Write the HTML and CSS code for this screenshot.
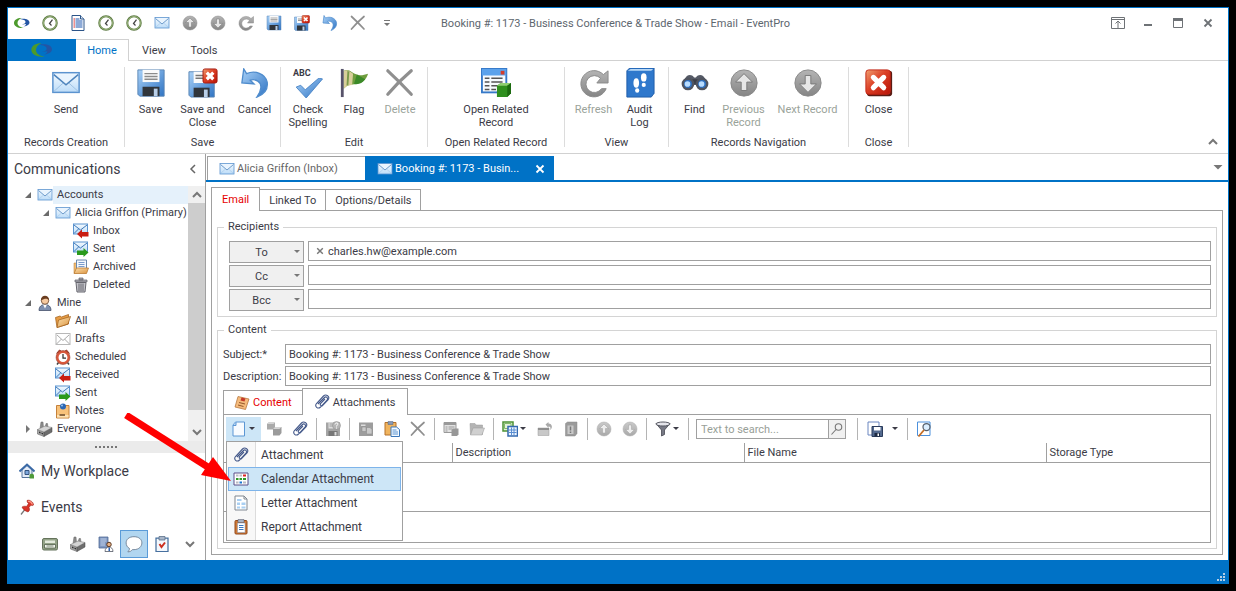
FILE: index.html
```html
<!DOCTYPE html>
<html lang="en">
<head>
  <meta charset="UTF-8">
  <meta name="viewport" content="width=device-width, initial-scale=1.0">
  <title>Booking #: 1173 - Business Conference &amp; Trade Show - Email - EventPro</title>
  <link rel="stylesheet" href="styles.css">
</head>
<body>
  <!-- Icons -->
  <svg class="sprite" aria-hidden="true">
    <defs>
      <linearGradient id="gBlue" x1="0" y1="0" x2="1" y2="1"><stop offset="0" stop-color="#a9d1f7"/><stop offset="1" stop-color="#2f74c4"/></linearGradient>
      <linearGradient id="gPale" x1="0" y1="0" x2="0" y2="1"><stop offset="0" stop-color="#f4faff"/><stop offset="1" stop-color="#bcdcf8"/></linearGradient>
      <linearGradient id="gGray" x1="0" y1="0" x2="0" y2="1"><stop offset="0" stop-color="#b4b4b4"/><stop offset="1" stop-color="#858585"/></linearGradient>
      <linearGradient id="gRed" x1="0" y1="0" x2="1" y2="1"><stop offset="0" stop-color="#f0a070"/><stop offset=".45" stop-color="#dc4026"/><stop offset="1" stop-color="#b81407"/></linearGradient>
      <linearGradient id="gFold" x1="0" y1="0" x2="1" y2="1"><stop offset="0" stop-color="#fbe0ae"/><stop offset="1" stop-color="#dc9440"/></linearGradient>
    </defs>
    <symbol id="logo" viewBox="0 0 32 24"><path d="M15 2C6 2 0 6 0 12s7 11 20 10c-8-1-13-5-13-10 0-4 3-8 8-10z" fill="#4c9a2c"/><path d="M12 4c10-2 19 1 19 7 0 4-4 7-12 8 3-1 5-3 5-5l-8 1c3-1 7-2 7-5 0-4-5-5-11-6z" fill="#2455a4"/></symbol>
    <symbol id="mail" viewBox="0 0 32 32"><rect x="2" y="5" width="28" height="21" fill="url(#gPale)" stroke="#5b93cf" stroke-width="1.600"/><path d="M3 25l10-9M29 25l-10-9" stroke="#9dc0e2" fill="none"/><path d="M3 7l13 11L29 7" fill="#e9f4fe" stroke="#4e84bc" stroke-width="1.600"/></symbol>
    <symbol id="mail-gray" viewBox="0 0 32 32"><rect x="2" y="5" width="28" height="22" fill="#fff" stroke="#b8b8b8" stroke-width="2"/><path d="M3 26l10-10M29 26L19 16M4 8l12 11L28 8" stroke="#aaa" stroke-width="2" fill="none"/></symbol>
    <symbol id="mail-in" viewBox="0 0 32 32"><rect x="1" y="2" width="28" height="20" fill="url(#gPale)" stroke="#5b93cf" stroke-width="2"/><path d="M2 4l13 10L28 4M2 21l9-9" fill="none" stroke="#3e78b8" stroke-width="2"/><path d="M8 22l10-9v5h13v9H18v4z" fill="#c91d12"/></symbol>
    <symbol id="mail-out" viewBox="0 0 32 32"><rect x="1" y="2" width="28" height="20" fill="url(#gPale)" stroke="#5b93cf" stroke-width="2"/><path d="M2 4l13 10L28 4M2 21l9-9" fill="none" stroke="#3e78b8" stroke-width="2"/><path d="M31 23l-10-9v5H8v9h13v4z" fill="#2a9a1c"/></symbol>
    <symbol id="clock" viewBox="0 0 32 32"><circle cx="16" cy="16" r="13.500" fill="#fff" stroke="#5d7a44" stroke-width="4"/><circle cx="16" cy="16" r="13" fill="none" stroke="#a9c48a" stroke-width="1.500"/><path d="M21 9l-6 8 4 4" fill="none" stroke="#444" stroke-width="2.500"/></symbol>
    <symbol id="doc" viewBox="0 0 32 32"><path d="M4 1h17l7 7v23H4z" fill="#fff" stroke="#2c5488" stroke-width="2"/><path d="M21 1v7h7" fill="#d8e4f2" stroke="#2c5488" stroke-width="2"/><path d="M7 8h3M7 12h3M7 16h3M7 20h3M7 24h3" stroke="#d22" stroke-width="2"/><path d="M11 8h8M11 12h14M11 16h14M11 20h14M11 24h14" stroke="#1d56b0" stroke-width="2.200"/></symbol>
    <symbol id="up" viewBox="0 0 32 32"><circle cx="16" cy="16" r="14" fill="url(#gGray)" stroke="#888"/><path d="M16 6l9 9h-6v9h-6v-9H7z" fill="#e6e6e6" stroke="#777"/></symbol>
    <symbol id="down" viewBox="0 0 32 32"><circle cx="16" cy="16" r="14" fill="url(#gGray)" stroke="#888"/><path d="M16 26l9-9h-6V8h-6v9H7z" fill="#e6e6e6" stroke="#777"/></symbol>
    <symbol id="refresh" viewBox="0 0 32 32"><path d="M29 22a14 14 0 1 1-3-15l5-4v13H19l4-5a9 9 0 1 0 1 11z" fill="url(#gGray)" stroke="#8a8a8a"/></symbol>
    <symbol id="disk" viewBox="0 0 32 32"><path d="M2 2h28v28H4l-2-2z" fill="url(#gBlue)" stroke="#5a85b4"/><path d="M7 2h18v13H7z" fill="#fafafa"/><path d="M9 6h14M9 9h14M9 12h14" stroke="#8b8b8b" stroke-width="1.500"/><path d="M7 20h18v10H7z" fill="#30353b"/><path d="M19 22h4v8h-4z" fill="#b9cfe8"/></symbol>
    <symbol id="disk-close" viewBox="0 0 32 32"><path d="M1 4h27v27H3l-2-2z" fill="url(#gBlue)" stroke="#5a85b4"/><path d="M6 4h16v12H6z" fill="#fafafa"/><path d="M8 8h12M8 11h12" stroke="#777" stroke-width="1.500"/><path d="M6 21h17v10H6z" fill="#30353b"/><path d="M17 23h4v8h-4z" fill="#b9cfe8"/><rect x="16" y="1" width="15" height="15" rx="2" fill="url(#gRed)" stroke="#a31a10"/><path d="M20 5l7 7M27 5l-7 7" stroke="#fff" stroke-width="3.500"/></symbol>
    <symbol id="undo" viewBox="0 0 32 32"><path d="M4 1l3 5c9-4 20 0 22 9 1 7-3 13-11 16 5-7 6-14 1-17-3-2-5-2-8-1l4 4-13-1z" fill="url(#gBlue)" stroke="#4f8ccd" stroke-width="1.400"/></symbol>
    <symbol id="cross" viewBox="0 0 32 32"><path d="M3 3q12 11 25 25M28 3Q15 14 3 28" fill="none" stroke="#8f8f8f" stroke-width="3.400" stroke-linecap="round"/></symbol>
    <symbol id="check" viewBox="0 0 32 22"><path d="M3 10l5-2 5 5L28 0l4 1-18 21z" fill="url(#gBlue)" stroke="#4a84c6"/></symbol>
    <symbol id="flag" viewBox="0 0 32 32"><path d="M5 3c6-3 9 3 14 4 4 2 8 0 12-1-2 7-7 10-13 11-5 1-8 0-13 5z" fill="#6f9d3e"/><path d="M5 3c4-2 7 1 10 3l-1 12c-4 0-6 1-9 4z" fill="#d8cf9a"/><path d="M9 3l2 1-1 14-2 1z" fill="#7a9a4a"/><path d="M19 7l-3 10c5 1 9-1 12-5z" fill="#3c8a28"/><path d="M2 1h3v30H2z" fill="#57536a"/></symbol>
    <symbol id="related" viewBox="0 0 32 32"><rect x="1" y="1" width="26" height="25" fill="#f7fbff" stroke="#3679c8" stroke-width="2"/><path d="M1 1h26v7H1z" fill="#5ba2ec"/><path d="M21 3h4v4h-4z" fill="#d43d2b"/><path d="M4 11h5M11 11h12M4 15h5M11 15h12M4 19h5M11 19h8M4 23h5M11 23h5" stroke="#555" stroke-width="1.500"/><path d="M17 19l4-3h11v11l-4 4H17z" fill="#2f8f1e"/><path d="M17 19l4-3h11l-4 3z" fill="#8fce72"/><path d="M28 19l4-3v11l-4 4z" fill="#1c6a10"/></symbol>
    <symbol id="audit" viewBox="0 0 32 32"><path d="M2 3l3-3h26v27l-3 4H2z" fill="#2f78cc" stroke="#1f5ca6"/><path d="M3 3h25l2-2H6z" fill="#b9d8f6"/><ellipse cx="12" cy="16" rx="3" ry="5" fill="#fff"/><ellipse cx="13" cy="24" rx="2.200" ry="2.400" fill="#fff"/><ellipse cx="20" cy="10" rx="3" ry="4.500" fill="#fff"/><ellipse cx="20" cy="18" rx="2.200" ry="2.300" fill="#fff"/></symbol>
    <symbol id="find" viewBox="0 0 32 32"><path d="M5 12c2-5 7-6 10-2h2c3-4 8-3 10 2l3 5H2z" fill="#555a66"/><path d="M13 12h6v6h-6z" fill="#3c3f49"/><circle cx="8.500" cy="17" r="5.500" fill="#2d6fc0" stroke="#50545f" stroke-width="2.500"/><circle cx="23.500" cy="17" r="5.500" fill="#2d6fc0" stroke="#50545f" stroke-width="2.500"/><circle cx="8" cy="17" r="3" fill="#b8dcff"/><circle cx="23" cy="17" r="3" fill="#b8dcff"/></symbol>
    <symbol id="close" viewBox="0 0 32 32"><rect x="3" y="3" width="27" height="27" rx="3" fill="#5a1c14"/><rect x="2" y="2" width="26" height="26" rx="3" fill="url(#gRed)" stroke="#c22414"/><path d="M10 10l11 11M21 10L10 21" stroke="#fff" stroke-width="5.500" stroke-linecap="round"/></symbol>
    <symbol id="archive" viewBox="0 0 32 32"><path d="M2 8h6v20H2z" fill="#f1bd76" stroke="#b9782e"/><path d="M7 2h20v20H7z" fill="#f4f8fd" stroke="#6a88ad" stroke-width="2"/><path d="M11 7h12M11 11h12M11 15h12" stroke="#7a9ccc" stroke-width="2"/><path d="M2 29l5-11h24l-4 11z" fill="url(#gFold)" stroke="#b9782e" stroke-width="1.500"/></symbol>
    <symbol id="trash" viewBox="0 0 32 32"><path d="M4 6h24v4H4zM12 2h8v4h-8z" fill="#a8a8b0" stroke="#66666e" stroke-width="1.500"/><path d="M6 11h20l-2 19H8z" fill="#c4c4ca" stroke="#66666e" stroke-width="2"/><path d="M12 13v15M16 13v15M20 13v15" stroke="#66666e" stroke-width="2"/></symbol>
    <symbol id="user" viewBox="0 0 32 32"><path d="M4 31c0-8 5-12 12-12s12 4 12 12z" fill="#7e90b0" stroke="#3d4a64" stroke-width="1.500"/><path d="M12 19l4 8 4-8z" fill="#fff"/><circle cx="16" cy="11" r="7.500" fill="#f5c9a0" stroke="#5c3a24" stroke-width="1.500"/><path d="M8 11c-1-13 17-13 16 0-3-5-9-4-16 0z" fill="#6b3d20"/></symbol>
    <symbol id="folder" viewBox="0 0 32 32"><path d="M1 9l9-3 3 2 14-5v19L4 29z" fill="#e79d45" stroke="#a3621e" stroke-width="1.500"/><path d="M4 29l3-15L31 7l-5 15z" fill="url(#gFold)" stroke="#a3621e" stroke-width="1.500"/></symbol>
    <symbol id="alarm" viewBox="0 0 32 32"><path d="M3 9l6-7 5 4M29 9l-6-7-5 4" fill="#d34b32" stroke="#8c2d1e" stroke-width="2"/><path d="M7 27l-3 4M25 27l3 4" stroke="#444" stroke-width="3"/><circle cx="16" cy="17" r="11.500" fill="#fff" stroke="#d8583c" stroke-width="5"/><circle cx="16" cy="17" r="14" fill="none" stroke="#8c3d2e"/><path d="M16 10v8h6" fill="none" stroke="#333" stroke-width="2.500"/></symbol>
    <symbol id="note" viewBox="0 0 32 32"><path d="M3 5h25v25H3z" fill="#f8c27a" stroke="#c5813a" stroke-width="2"/><path d="M4 24h23v5H4z" fill="#fde2b4"/><path d="M9 22h11v4H9z" fill="#8d6a42"/><circle cx="16" cy="7" r="6" fill="#2b68b5"/><circle cx="14" cy="5" r="2" fill="#9cc8f2"/></symbol>
    <symbol id="factory" viewBox="0 0 32 32"><path d="M6 15L8 2h4l1 11 4-3 1-5h3l1 8z" fill="#8a8a8a" stroke="#666"/><path d="M1 17l13 5v9L1 26z" fill="#a6a6a6" stroke="#555"/><path d="M14 22l16-9v9l-16 9z" fill="#6d6d6d" stroke="#444"/><path d="M1 17l15-7 14 3-16 9z" fill="#d4d4d4" stroke="#777"/><path d="M4 21l3 1v3l-3-1zM9 23l3 1v3l-3-1z" fill="#333"/></symbol>
    <symbol id="home" viewBox="0 0 32 32"><path d="M6 14L16 5l10 9v15H6z" fill="#e4ecf8" stroke="#55749c" stroke-width="2"/><path d="M1 17L16 3l15 14" fill="none" stroke="#3b6aa6" stroke-width="4"/><path d="M12 15h8v8h-8z" fill="#7da7dc" stroke="#34557f" stroke-width="2"/><path d="M21 25c0-5 9-5 9 0v6h-9z" fill="#4e9a3a"/></symbol>
    <symbol id="pin" viewBox="0 0 32 32"><path d="M4 31l10-13" stroke="#777" stroke-width="2.500"/><path d="M16 3c5-3 14 4 13 9-2 2-4 1-5 0l-4 5c2 4 1 7-2 9-6-2-10-5-12-10 3-2 6-2 9-1l4-6c-2-1-3-4-3-6z" fill="#d83428" stroke="#98180f"/><path d="M18 5c3-1 7 2 9 6" stroke="#ff9d8c" stroke-width="2.500" fill="none"/></symbol>
    <symbol id="register" viewBox="0 0 32 32"><rect x="1" y="5" width="30" height="23" rx="3" fill="#93a387" stroke="#65735c" stroke-width="2"/><path d="M6 9h20v5H6z" fill="#e3eadc"/><path d="M5 17h22v7H5z" fill="#f2f6ee" stroke="#4b5844" stroke-width="1.500"/><path d="M9 20h14" stroke="#7d8b74" stroke-width="2"/></symbol>
    <symbol id="building" viewBox="0 0 32 32"><path d="M2 2h18v22H2z" fill="#7f97c0" stroke="#4a6390" stroke-width="1.500"/><path d="M5 6h12M5 10h12M5 14h9M5 18h9" stroke="#d4e2f5" stroke-width="1.500"/><path d="M14 31c0-6 4-9 8-9s8 3 8 9z" fill="#fff" stroke="#4a4f5c" stroke-width="1.500"/><path d="M21 23h3v7h-3z" fill="#2d62b4"/><circle cx="22" cy="17" r="4.500" fill="#e7b184" stroke="#5c3a24" stroke-width="2"/></symbol>
    <symbol id="chat" viewBox="0 0 32 32"><path d="M16 3c9 0 14 5 14 11s-5 12-14 12l-3 0c-2 3-5 4-8 4 2-2 3-4 3-6-4-2-6-6-6-10C2 8 7 3 16 3z" fill="#fff" stroke="#6d7f93" stroke-width="1.600"/></symbol>
    <symbol id="task" viewBox="0 0 32 32"><path d="M4 4h24v27H4z" fill="#f4f8fd" stroke="#47709f" stroke-width="2.500"/><path d="M10 1h12v7H10z" fill="#a9b6c8" stroke="#566b86" stroke-width="1.500"/><path d="M11 16l4 6 7-9" fill="none" stroke="#cc2f1f" stroke-width="4"/></symbol>
    <symbol id="clip" viewBox="0 0 32 32"><path d="M8 20L21 7c3-3 8 1 5 5L13 26c-5 5-13-1-8-7L19 4c5-5 14 1 9 8L17 23c-2 2-6-1-4-4l9-9" fill="none" stroke="#44598a" stroke-width="2.200"/></symbol>
    <symbol id="new" viewBox="0 0 32 32"><path d="M9 2h18v28H4V8z" fill="#f8fbff" stroke="#5c97d4" stroke-width="2"/><path d="M4 9h6V2" fill="#b7d6f5" stroke="#5c97d4" stroke-width="2"/></symbol>
    <symbol id="cubes" viewBox="0 0 32 32"><path d="M2 6l3-3h13v11l-3 3H2z" fill="#aaa"/><path d="M14 16l4-4h13v12l-4 5H14z" fill="#9b9b9b"/><path d="M2 6l3-3h13l-3 3zM14 16l4-4h13l-4 4z" fill="#d4d4d4"/></symbol>
    <symbol id="disk-help" viewBox="0 0 32 32"><path d="M2 3h28v27H2z" fill="#a5a5a5"/><path d="M7 3h12v12H7z" fill="#ddd"/><path d="M9 6h8M9 10h8" stroke="#999" stroke-width="2"/><path d="M7 20h18v10H7z" fill="#777"/><path d="M19 22h4v7h-4z" fill="#ddd"/><circle cx="23" cy="9" r="8" fill="#b5b5b5" stroke="#8b8b8b"/><path d="M20 7c0-4 6-4 6-1 0 2-3 2-3 5M23 13v2" fill="none" stroke="#fff" stroke-width="2"/></symbol>
    <symbol id="copy-gray" viewBox="0 0 32 32"><path d="M2 3h28v27H2z" fill="#9d9d9d"/><path d="M6 7h9v3H6z" fill="#ddd"/><path d="M8 12h8v9H8zM17 13h7l4 4v9H17z" fill="#c9c9c9" stroke="#868686"/></symbol>
    <symbol id="paste" viewBox="0 0 32 32"><path d="M2 3h22v25H2z" fill="#f0b45e" stroke="#b5712a" stroke-width="2"/><path d="M8 1h10v6H8z" fill="#8798b4" stroke="#516585"/><path d="M14 12h11l6 5v14H14z" fill="#f4faff" stroke="#3c78ba" stroke-width="2"/><path d="M17 18h8M17 22h11M17 26h11" stroke="#5b94d2" stroke-width="2"/></symbol>
    <symbol id="form-gray" viewBox="0 0 32 32"><path d="M2 3h24v20H2z" fill="#e2e2e2" stroke="#999" stroke-width="2"/><path d="M2 3h24v5H2z" fill="#999"/><path d="M5 12h4M11 12h12M5 16h4M11 16h8M5 20h4" stroke="#999" stroke-width="2"/><path d="M17 18l3-3h11v12l-3 3H17z" fill="#979797"/></symbol>
    <symbol id="folder-gray" viewBox="0 0 32 32"><path d="M2 5h10l2 3h13v19H3z" fill="#b4b4b4" stroke="#999"/><path d="M3 28l5-14h23l-5 14z" fill="#d0d0d0" stroke="#999"/></symbol>
    <symbol id="grid" viewBox="0 0 32 32"><path d="M2 2h20v18H2z" fill="#e3f2d8" stroke="#4d9234" stroke-width="3"/><path d="M5 5h13v10H5z" fill="none" stroke="#83b86a" stroke-width="2"/><path d="M12 11h19v19H12z" fill="#edf5ff" stroke="#3569b0" stroke-width="3"/><path d="M14 18h15M14 23h15M19 13v15M24 13v15" stroke="#5b8ed2" stroke-width="2"/></symbol>
    <symbol id="export" viewBox="0 0 32 32"><path d="M2 14h22v15H2z" fill="#c8c8c8" stroke="#999"/><path d="M2 14h22v4H2z" fill="#8f8f8f"/><path d="M17 7l6-5v3c8 0 9 10 3 13 2-4 1-7-3-7v3z" fill="#aaa"/></symbol>
    <symbol id="book-gray" viewBox="0 0 32 32"><path d="M5 5l4-3h19v23l-4 5H5z" fill="#9b9b9b" stroke="#888"/><path d="M9 9h12v17H9z" fill="#c9c9c9"/><path d="M15 11v8M15 21v3" stroke="#777" stroke-width="3"/></symbol>
    <symbol id="filter" viewBox="0 0 32 32"><path d="M2 5l11 13v12l6-3v-9L30 5z" fill="#777985" stroke="#42434c" stroke-width="1.500"/><ellipse cx="16" cy="6" rx="14" ry="4" fill="#e4e4ea" stroke="#555761" stroke-width="2"/></symbol>
    <symbol id="search" viewBox="0 0 32 32"><circle cx="19" cy="12" r="6.500" fill="none" stroke="#777" stroke-width="2.200"/><path d="M14 17L5 27" stroke="#777" stroke-width="2.200"/></symbol>
    <symbol id="save-page" viewBox="0 0 32 32"><path d="M2 2h22v26H2z" fill="#fff" stroke="#6a86c0" stroke-width="2"/><path d="M10 11h21v20H10z" fill="#53698e" stroke="#2b3c5c" stroke-width="2"/><path d="M14 12h13v7H14z" fill="#fff"/><path d="M15 24h11v7H15z" fill="#1d2a42"/><path d="M21 25h3v5h-3z" fill="#fff"/></symbol>
    <symbol id="preview" viewBox="0 0 32 32"><path d="M3 2h25v27H3z" fill="#fff" stroke="#4b90dc" stroke-width="2"/><circle cx="21" cy="12" r="7" fill="#dcefff" stroke="#55606e" stroke-width="2.500"/><path d="M16 18L5 31" stroke="#c66e25" stroke-width="3.500"/></symbol>
    <symbol id="note-pin" viewBox="0 0 32 32"><path d="M8 3l22 5-7 21L2 24z" fill="#f5bb7c" stroke="#b5743a" stroke-width="1.500"/><path d="M10 15l12 3M8 20l11 3" stroke="#94582a" stroke-width="2"/><path d="M15 5l8 2-2 6-8-2z" fill="#c43a2a"/></symbol>
    <symbol id="calendar" viewBox="0 0 32 32"><path d="M2 4h28v24H2z" fill="#fff" stroke="#5a4f88" stroke-width="2"/><path d="M6 7h5v4H6zM13 7h5v4h-5z" fill="#b9b9c4"/><path d="M20 7h6v4h-6z" fill="#d22"/><path d="M6 14h5v4H6zM13 14h5v4h-5zM20 14h6v4h-6z" fill="#2d9a25"/><path d="M6 21h5v4H6zM20 21h6v4h-6z" fill="#b9b9c4"/><path d="M13 21h5v4h-5z" fill="#1874d0"/></symbol>
    <symbol id="letter" viewBox="0 0 32 32"><path d="M4 2h18l6 6v22H4z" fill="#fff" stroke="#808891" stroke-width="2"/><path d="M22 2v6h6" fill="none" stroke="#808891" stroke-width="2"/><path d="M8 8h9v4H8zM8 15h6v5H8zM17 15h8v5h-8zM8 23h6v4H8zM17 23h8v4h-8z" fill="#a9cff2"/></symbol>
    <symbol id="report" viewBox="0 0 32 32"><rect x="4" y="3" width="24" height="27" rx="2" fill="#d07a36" stroke="#92481a" stroke-width="2"/><path d="M9 8h15v19H9z" fill="#fff" stroke="#7f93b0"/><path d="M10 1h12v6H10z" fill="#a8b3c4" stroke="#556"/><path d="M12 13h9M12 17h9M12 21h9" stroke="#3b77c0" stroke-width="2"/></symbol>
    <symbol id="caret" viewBox="0 0 8 8"><path d="M1 2h6L4 5z" fill="currentColor"/></symbol>
    <symbol id="overflow" viewBox="0 0 8 8"><path d="M1 1h6v1H1zM1 4h6L4 7z" fill="#777"/></symbol>
    <symbol id="chev-up" viewBox="0 0 10 10"><path d="M1 7l4-4 4 4" fill="none" stroke="#777" stroke-width="2"/></symbol>
    <symbol id="chev-down" viewBox="0 0 10 10"><path d="M1 3l4 4 4-4" fill="none" stroke="#777" stroke-width="2"/></symbol>
    <symbol id="chev-left" viewBox="0 0 10 10"><path d="M7 1L3 5l4 4" fill="none" stroke="#666" stroke-width="1.500"/></symbol>
    <symbol id="x" viewBox="0 0 10 10"><path d="M1.500 1.500l7 7M8.500 1.500l-7 7" fill="none" stroke="currentColor" stroke-width="1.800"/></symbol>
    <symbol id="open" viewBox="0 0 8 8"><path d="M7 1v6H1z" fill="#6b6b6b"/></symbol>
    <symbol id="shut" viewBox="0 0 8 8"><path d="M2 0l4 4-4 4z" fill="#777"/></symbol>
    <symbol id="w-pop" viewBox="0 0 14 12"><path d="M.5.5h13v11H.5zM1 2.500h12" fill="none" stroke="#6e7276"/><path d="M7 4v7M4.500 6.500L7 4l2.500 2.500" fill="none" stroke="#6e7276"/></symbol>
    <symbol id="w-min" viewBox="0 0 10 10"><path d="M1 6h8v2H1z" fill="#6e7276"/></symbol>
    <symbol id="w-max" viewBox="0 0 10 10"><path d="M.5.5h9v9h-9z" fill="none" stroke="#6e7276"/><path d="M0 0h10v3H0z" fill="#6e7276"/></symbol>
  </svg>

  <div class="window">
    <!-- Title bar -->
    <header class="titlebar">
      <div class="quick-access">
        <button aria-label="EventPro"><svg class="icon"><use href="#logo"/></svg></button>
        <button aria-label="Clock"><svg class="icon"><use href="#clock"/></svg></button>
        <button aria-label="Document"><svg class="icon"><use href="#doc"/></svg></button>
        <button aria-label="Start"><svg class="icon"><use href="#clock"/></svg></button>
        <button aria-label="Stop"><svg class="icon"><use href="#clock"/></svg></button>
        <button aria-label="Send"><svg class="icon"><use href="#mail"/></svg></button>
        <button aria-label="Previous"><svg class="icon"><use href="#up"/></svg></button>
        <button aria-label="Next"><svg class="icon"><use href="#down"/></svg></button>
        <button aria-label="Refresh"><svg class="icon"><use href="#refresh"/></svg></button>
        <button aria-label="Save"><svg class="icon"><use href="#disk"/></svg></button>
        <button aria-label="Save and Close"><svg class="icon"><use href="#disk-close"/></svg></button>
        <button aria-label="Cancel"><svg class="icon"><use href="#undo"/></svg></button>
        <button aria-label="Delete"><svg class="icon"><use href="#cross"/></svg></button>
        <button class="customize" aria-label="Customize"><svg class="tiny"><use href="#overflow"/></svg></button>
      </div>
      <h1 class="window-title">Booking #: 1173 - Business Conference &amp; Trade Show - Email - EventPro</h1>
      <div class="window-controls">
        <button aria-label="Ribbon options"><svg class="pop"><use href="#w-pop"/></svg></button>
        <button aria-label="Minimize"><svg class="small"><use href="#w-min"/></svg></button>
        <button aria-label="Maximize"><svg class="small"><use href="#w-max"/></svg></button>
        <button aria-label="Close window"><svg class="small"><use href="#x"/></svg></button>
      </div>
    </header>

    <!-- Ribbon -->
    <nav class="ribbon-tabs">
      <button class="file-tab" aria-label="File"><svg class="file-logo"><use href="#logo"/></svg></button>
      <button class="ribbon-tab active">Home</button>
      <button class="ribbon-tab">View</button>
      <button class="ribbon-tab">Tools</button>
    </nav>
    <div class="ribbon">
      <section class="ribbon-group creation">
        <div class="commands">
          <button class="command"><svg class="big"><use href="#mail"/></svg>Send</button>
        </div>
        <h2>Records Creation</h2>
      </section>
      <section class="ribbon-group save">
        <div class="commands">
          <button class="command"><svg class="big"><use href="#disk"/></svg>Save</button>
          <button class="command"><svg class="big"><use href="#disk-close"/></svg>Save and Close</button>
          <button class="command"><svg class="big"><use href="#undo"/></svg>Cancel</button>
        </div>
        <h2>Save</h2>
      </section>
      <section class="ribbon-group edit">
        <div class="commands">
          <button class="command narrow"><span class="abc">ABC</span><svg class="check"><use href="#check"/></svg>Check Spelling</button>
          <button class="command narrow"><svg class="big"><use href="#flag"/></svg>Flag</button>
          <button class="command narrow" disabled><svg class="big"><use href="#cross"/></svg>Delete</button>
        </div>
        <h2>Edit</h2>
      </section>
      <section class="ribbon-group related">
        <div class="commands">
          <button class="command wide"><svg class="big"><use href="#related"/></svg>Open Related Record</button>
        </div>
        <h2>Open Related Record</h2>
      </section>
      <section class="ribbon-group view">
        <div class="commands">
          <button class="command narrow" disabled><svg class="big"><use href="#refresh"/></svg>Refresh</button>
          <button class="command narrow"><svg class="big"><use href="#audit"/></svg>Audit<br>Log</button>
        </div>
        <h2>View</h2>
      </section>
      <section class="ribbon-group navigation">
        <div class="commands">
          <button class="command narrow"><svg class="big"><use href="#find"/></svg>Find</button>
          <button class="command" disabled><svg class="big"><use href="#up"/></svg>Previous Record</button>
          <button class="command wide" disabled><svg class="big"><use href="#down"/></svg>Next Record</button>
        </div>
        <h2>Records Navigation</h2>
      </section>
      <section class="ribbon-group closing">
        <div class="commands">
          <button class="command narrow"><svg class="big"><use href="#close"/></svg>Close</button>
        </div>
        <h2>Close</h2>
      </section>
      <button class="collapse-ribbon" aria-label="Collapse ribbon"><svg class="small"><use href="#chev-up"/></svg></button>
    </div>

    <div class="workspace">
      <!-- Sidebar -->
      <aside class="sidebar">
        <div class="sidebar-header">
          <h2>Communications</h2>
          <button aria-label="Collapse"><svg class="small"><use href="#chev-left"/></svg></button>
        </div>
        <div class="tree-wrap">
          <ul class="tree">
            <li><a href="#" class="selected"><span class="expander"><svg class="tiny"><use href="#open"/></svg></span><svg class="icon"><use href="#mail"/></svg><span class="name">Accounts</span></a>
              <ul>
                <li><a href="#"><span class="expander"><svg class="tiny"><use href="#open"/></svg></span><svg class="icon"><use href="#mail"/></svg><span class="name">Alicia Griffon (Primary)</span></a>
                  <ul>
                    <li><a href="#"><span class="expander"></span><svg class="icon"><use href="#mail-in"/></svg><span class="name">Inbox</span></a></li>
                    <li><a href="#"><span class="expander"></span><svg class="icon"><use href="#mail-out"/></svg><span class="name">Sent</span></a></li>
                    <li><a href="#"><span class="expander"></span><svg class="icon"><use href="#archive"/></svg><span class="name">Archived</span></a></li>
                    <li><a href="#"><span class="expander"></span><svg class="icon"><use href="#trash"/></svg><span class="name">Deleted</span></a></li>
                  </ul>
                </li>
              </ul>
            </li>
            <li><a href="#"><span class="expander"><svg class="tiny"><use href="#open"/></svg></span><svg class="icon"><use href="#user"/></svg><span class="name">Mine</span></a>
              <ul>
                <li><a href="#"><span class="expander"></span><svg class="icon"><use href="#folder"/></svg><span class="name">All</span></a></li>
                <li><a href="#"><span class="expander"></span><svg class="icon"><use href="#mail-gray"/></svg><span class="name">Drafts</span></a></li>
                <li><a href="#"><span class="expander"></span><svg class="icon"><use href="#alarm"/></svg><span class="name">Scheduled</span></a></li>
                <li><a href="#"><span class="expander"></span><svg class="icon"><use href="#mail-in"/></svg><span class="name">Received</span></a></li>
                <li><a href="#"><span class="expander"></span><svg class="icon"><use href="#mail-out"/></svg><span class="name">Sent</span></a></li>
                <li><a href="#"><span class="expander"></span><svg class="icon"><use href="#note"/></svg><span class="name">Notes</span></a></li>
              </ul>
            </li>
            <li><a href="#"><span class="expander"><svg class="tiny"><use href="#shut"/></svg></span><svg class="icon"><use href="#factory"/></svg><span class="name">Everyone</span></a></li>
          </ul>
          <div class="scrollbar">
            <svg class="small"><use href="#chev-up"/></svg>
            <div class="thumb"></div>
            <svg class="small"><use href="#chev-down"/></svg>
          </div>
        </div>
        <div class="splitter"></div>
        <a href="#" class="module"><svg class="icon"><use href="#home"/></svg>My Workplace</a>
        <a href="#" class="module"><svg class="icon"><use href="#pin"/></svg>Events</a>
        <div class="module-bar">
          <button aria-label="Accounting"><svg class="icon"><use href="#register"/></svg></button>
          <button aria-label="Venues"><svg class="icon"><use href="#factory"/></svg></button>
          <button aria-label="Accounts"><svg class="icon"><use href="#building"/></svg></button>
          <button class="active" aria-label="Communications"><svg class="chat"><use href="#chat"/></svg></button>
          <button aria-label="Tasks"><svg class="icon"><use href="#task"/></svg></button>
          <button aria-label="More"><svg class="small"><use href="#chev-down"/></svg></button>
        </div>
      </aside>

      <!-- Documents -->
      <main class="documents">
        <div class="doc-tabs">
          <button class="doc-tab first"><svg class="icon"><use href="#mail"/></svg>Alicia Griffon (Inbox)</button>
          <button class="doc-tab active"><svg class="icon"><use href="#mail"/></svg><span>Booking #: 1173 - Busin...</span><svg class="small"><use href="#x"/></svg></button>
          <button class="doc-list" aria-label="Open documents"><svg class="caret-lg"><use href="#caret"/></svg></button>
        </div>

        <div class="page">
          <div class="tabs">
            <button class="tab active required">Email</button>
            <button class="tab">Linked To</button>
            <button class="tab">Options/Details</button>
          </div>
          <form class="panel">
            <fieldset class="recipients">
              <legend>Recipients</legend>
              <div class="recipient">
                <button type="button" class="pick"><span>To</span><svg class="tiny"><use href="#caret"/></svg></button>
                <div class="address"><button type="button" aria-label="Remove"><svg class="mini"><use href="#x"/></svg></button><input type="text" aria-label="To" value="charles.hw@example.com"></div>
              </div>
              <div class="recipient">
                <button type="button" class="pick"><span>Cc</span><svg class="tiny"><use href="#caret"/></svg></button>
                <div class="address"><input type="text" aria-label="Cc"></div>
              </div>
              <div class="recipient">
                <button type="button" class="pick"><span>Bcc</span><svg class="tiny"><use href="#caret"/></svg></button>
                <div class="address"><input type="text" aria-label="Bcc"></div>
              </div>
            </fieldset>

            <fieldset class="content">
              <legend>Content</legend>
              <div class="field">
                <label for="subject">Subject:*</label>
                <input type="text" id="subject" value="Booking #: 1173 - Business Conference &amp; Trade Show">
              </div>
              <div class="field">
                <label for="description">Description:</label>
                <input type="text" id="description" value="Booking #: 1173 - Business Conference &amp; Trade Show">
              </div>
              <div class="tabs inner">
                <button type="button" class="tab required"><svg class="icon"><use href="#note-pin"/></svg>Content</button>
                <button type="button" class="tab active"><svg class="icon"><use href="#clip"/></svg>Attachments</button>
              </div>
              <div class="attachments">
                <div class="toolbar">
                  <div class="dropdown">
                    <button type="button" class="tool split open" aria-label="New"><svg class="icon"><use href="#new"/></svg><svg class="tiny"><use href="#caret"/></svg></button>
                    <ul class="menu">
                      <li><button type="button"><svg class="icon"><use href="#clip"/></svg><span>Attachment</span></button></li>
                      <li><button type="button" class="hover"><svg class="icon"><use href="#calendar"/></svg><span>Calendar Attachment</span></button></li>
                      <li><button type="button"><svg class="icon"><use href="#letter"/></svg><span>Letter Attachment</span></button></li>
                      <li><button type="button"><svg class="icon"><use href="#report"/></svg><span>Report Attachment</span></button></li>
                    </ul>
                  </div>
                  <button type="button" class="tool" aria-label="Link record"><svg class="icon"><use href="#cubes"/></svg></button>
                  <button type="button" class="tool" aria-label="Attach"><svg class="icon"><use href="#clip"/></svg></button>
                  <span class="divider"></span>
                  <button type="button" class="tool" aria-label="Save as"><svg class="icon"><use href="#disk-help"/></svg></button>
                  <span class="divider"></span>
                  <button type="button" class="tool" aria-label="Copy"><svg class="icon"><use href="#copy-gray"/></svg></button>
                  <button type="button" class="tool" aria-label="Paste"><svg class="icon"><use href="#paste"/></svg></button>
                  <button type="button" class="tool" aria-label="Delete"><svg class="icon"><use href="#cross"/></svg></button>
                  <span class="divider"></span>
                  <button type="button" class="tool" aria-label="Open record"><svg class="icon"><use href="#form-gray"/></svg></button>
                  <button type="button" class="tool" aria-label="Open"><svg class="icon"><use href="#folder-gray"/></svg></button>
                  <span class="divider"></span>
                  <button type="button" class="tool split" aria-label="Layouts"><svg class="icon"><use href="#grid"/></svg><svg class="tiny"><use href="#caret"/></svg></button>
                  <button type="button" class="tool" aria-label="Export"><svg class="icon"><use href="#export"/></svg></button>
                  <button type="button" class="tool" aria-label="Log"><svg class="icon"><use href="#book-gray"/></svg></button>
                  <span class="divider"></span>
                  <button type="button" class="tool faded" aria-label="Move up"><svg class="icon"><use href="#up"/></svg></button>
                  <button type="button" class="tool faded" aria-label="Move down"><svg class="icon"><use href="#down"/></svg></button>
                  <span class="divider"></span>
                  <button type="button" class="tool split" aria-label="Filter"><svg class="icon"><use href="#filter"/></svg><svg class="tiny"><use href="#caret"/></svg></button>
                  <span class="divider"></span>
                  <div class="search">
                    <input type="text" placeholder="Text to search..." aria-label="Text to search">
                    <button type="button" aria-label="Search"><svg class="icon"><use href="#search"/></svg></button>
                  </div>
                  <span class="divider"></span>
                  <button type="button" class="tool split roomy" aria-label="Save layout"><svg class="icon"><use href="#save-page"/></svg><svg class="tiny"><use href="#caret"/></svg></button>
                  <span class="divider"></span>
                  <button type="button" class="tool" aria-label="Preview"><svg class="icon"><use href="#preview"/></svg></button>
                </div>
                <table class="grid">
                  <colgroup><col class="c-name"><col class="c-desc"><col class="c-file"><col></colgroup>
                  <thead>
                    <tr><th></th><th>Description</th><th>File Name</th><th>Storage Type</th></tr>
                  </thead>
                </table>
                <div class="grid-space"></div>
                <div class="grid-footer"></div>
              </div>
            </fieldset>
          </form>
        </div>
      </main>

      <!-- Pointer to the highlighted menu item -->
      <svg class="pointer" viewBox="0 0 110 72"><path d="M3 2L88 56" stroke="#f00" stroke-width="7"/><path d="M90 44L78 62L108 68z" fill="#f00"/></svg>
    </div>

    <footer class="statusbar">
      <svg class="grip" viewBox="0 0 8 8"><path d="M6 0h2v2H6zM3 3h2v2H3zM6 3h2v2H6zM0 6h2v2H0zM3 6h2v2H3zM6 6h2v2H6z" fill="#b5cfe6"/></svg>
    </footer>
  </div>
</body>
</html>
```

FILE: styles.css
```css
* {
  box-sizing: border-box;
}

body {
  margin: 0;
  padding: 7px;
  background: #000;
  color: #3b3b46;
  font-family: Roboto, Tahoma, sans-serif;
  font-size: 11px;
  line-height: 13px;
}

button,
input {
  font: inherit;
  color: inherit;
  margin: 0;
  padding: 0;
  border: 0;
  background: none;
}

h1,
h2 {
  margin: 0;
  font-size: 11px;
  font-weight: 400;
}

ul {
  list-style: none;
  margin: 0;
  padding: 0;
}

a {
  color: inherit;
  text-decoration: none;
}

svg {
  flex: none;
  display: block;
}

.sprite {
  position: absolute;
  width: 0;
  height: 0;
}

.icon {
  width: 16px;
  height: 16px;
}

.big {
  width: 30px;
  height: 30px;
}

.small {
  width: 10px;
  height: 10px;
}

.tiny,
.mini {
  width: 8px;
  height: 8px;
}

.window {
  display: flex;
  flex-direction: column;
  min-height: calc(100vh - 14px);
  background: #fff;
  border: 1px solid #0072c6;
  border-bottom: 0;
}

/* Title bar */
.titlebar {
  display: flex;
  align-items: center;
  height: 31px;
  padding-bottom: 1px;
}

.quick-access,
.window-controls {
  display: flex;
  flex: 1;
}

.quick-access button,
.window-controls button {
  display: flex;
  align-items: center;
  justify-content: center;
  width: 28px;
  height: 28px;
}

.quick-access .customize {
  width: 30px;
}

.window-title {
  color: #5d666e;
  white-space: nowrap;
}

.window-controls {
  justify-content: flex-end;
  padding-right: 5px;
  color: #6e7276;
}

.window-controls button {
  width: 30px;
}

.pop {
  width: 14px;
  height: 12px;
}

/* Ribbon */
.ribbon-tabs {
  display: flex;
  height: 22px;
  border-bottom: 1px solid #d1d1d1;
}

.file-tab {
  display: flex;
  align-items: center;
  justify-content: center;
  width: 68px;
  height: 22px;
  background: #0072c6;
}

.file-logo {
  width: 22px;
  height: 16px;
}

.ribbon-tab {
  height: 22px;
  width: 50px;
}

.ribbon-tab.active {
  width: 53px;
  color: #0072c6;
  background: #fff;
  border: 1px solid #d1d1d1;
  border-bottom: 0;
  border-left: 0;
}

.ribbon {
  display: flex;
  height: 93px;
  padding-top: 6px;
  border-bottom: 1px solid #d1d1d1;
}

.ribbon-group {
  display: flex;
  flex-direction: column;
  justify-content: space-between;
  height: 80px;
  padding: 1px 3px 0;
  border-right: 1px solid #dcdcdc;
  text-align: center;
}

.creation { width: 117px; }
.save { width: 156px; }
.edit { width: 147px; }
.related { width: 137px; }
.view { width: 104px; }
.navigation { width: 180px; }
.closing { width: 60px; }

.ribbon-group h2 {
  line-height: 8px;
  white-space: nowrap;
}

.commands {
  display: flex;
  justify-content: center;
  align-items: flex-start;
}

.command {
  display: block;
  flex: none;
  width: 52px;
}

.command.narrow {
  width: 46px;
}

.command.wide {
  width: 76px;
}

.command .big {
  margin: 0 auto 5px;
}

.abc {
  display: block;
  width: 30px;
  margin: 0 auto;
  font-size: 9px;
  font-weight: 700;
  line-height: 10px;
  text-align: left;
}

.check {
  width: 30px;
  height: 20px;
  margin: 0 auto 5px;
}

.command:disabled {
  color: #9aa39a;
}

.collapse-ribbon {
  align-self: flex-end;
  margin-left: auto;
  padding: 0 10px 6px;
}

/* Workspace */
.workspace {
  position: relative;
  display: flex;
  flex: 1;
}

.sidebar {
  display: flex;
  flex-direction: column;
  flex: none;
  width: 198px;
  border-right: 1px solid #a0a0a0;
}

.sidebar-header {
  display: flex;
  align-items: center;
  justify-content: space-between;
  height: 32px;
  padding: 0 7px 2px 6px;
}

.sidebar-header h2 {
  font-size: 14px;
}

.tree-wrap {
  display: flex;
  flex: 1;
}

.tree {
  flex: 1;
  min-width: 0;
}

.tree a {
  display: flex;
  align-items: center;
  height: 18px;
  white-space: nowrap;
}

.tree > li > a {
  padding-left: 11px;
}

.tree > li > ul > li > a {
  padding-left: 29px;
}

.tree ul ul a {
  padding-left: 47px;
}

.expander {
  display: flex;
  justify-content: center;
  width: 18px;
}

.name {
  flex: 1;
  line-height: 18px;
  padding-left: 4px;
}

.tree .selected .name {
  background: #e5f1fb;
}

.scrollbar {
  display: flex;
  flex-direction: column;
  flex: none;
  align-items: center;
  width: 17px;
  padding: 4px 0;
  background: #f0f0f0;
}

.thumb {
  flex: 1;
  width: 17px;
  margin: 3px 0 17px;
  background: #cdcdcd;
}

.splitter {
  display: flex;
  align-items: center;
  justify-content: center;
  height: 12px;
  background: #ebebeb;
}

.splitter::before {
  content: "";
  width: 23px;
  height: 2px;
  background: repeating-linear-gradient(90deg, #777 0 2px, transparent 2px 4px);
}

.module {
  display: flex;
  align-items: center;
  gap: 6px;
  height: 36px;
  padding-left: 11px;
  font-size: 14px;
}

.module-bar {
  display: flex;
  justify-content: flex-end;
  height: 35px;
  padding: 5px 1px 2px 0;
}

.module-bar button {
  display: flex;
  align-items: center;
  justify-content: center;
  width: 28px;
  height: 28px;
}

.module-bar .active {
  background: #b1d6f0;
  border: 1px solid #5a9bd8;
}

.chat {
  width: 18px;
  height: 18px;
}

/* Document tabs */
.documents {
  display: flex;
  flex-direction: column;
  flex: 1;
  min-width: 0;
}

.doc-tabs {
  display: flex;
  height: 28px;
  padding: 2px 0 0 1px;
  border-bottom: 2px solid #0072c6;
}

.doc-tab {
  display: flex;
  align-items: center;
  gap: 2px;
  width: 158px;
  padding-left: 11px;
  color: #666;
  border: 1px solid #a0a0a0;
  border-right: 0;
  border-bottom: 0;
}

.doc-tab.active {
  width: 189px;
  color: #fff;
  background: #0072c6;
  border-color: #0072c6;
}

.doc-tab.active .small {
  margin-left: auto;
  margin-right: 9px;
}

.doc-list {
  margin-left: auto;
  padding-right: 4px;
  color: #777;
}

.caret-lg {
  width: 12px;
  height: 12px;
}

.page {
  display: flex;
  flex-direction: column;
  flex: 1;
  padding: 5px;
}

.tabs {
  display: flex;
  align-items: flex-end;
}

.tab {
  display: flex;
  align-items: center;
  justify-content: center;
  gap: 3px;
  height: 21px;
  padding: 0 9px;
  margin-right: -1px;
  background: #fff;
  border: 1px solid #a0a0a0;
  border-bottom: 0;
}

.tab.active {
  position: relative;
  height: 24px;
  margin-bottom: -1px;
  padding: 0 10px;
}

.tab.required {
  color: #e60000;
}

.panel {
  display: flex;
  flex-direction: column;
  flex: 1;
  padding: 9px 5px 5px;
  border: 1px solid #a0a0a0;
}

fieldset {
  min-width: 0;
  margin: 0;
  padding: 7px 5px 5px;
  border: 1px solid #d4d4d4;
}

legend {
  height: 14px;
  margin-left: 1px;
  padding: 0 4px;
}

.recipients {
  display: flex;
  flex-direction: column;
  gap: 2px;
  padding-left: 11px;
}

.recipients legend {
  margin-left: -5px;
}

.recipient {
  display: flex;
  gap: 4px;
}

.pick {
  display: flex;
  align-items: center;
  width: 75px;
  height: 22px;
  padding-right: 2px;
  background: #f0f0f0;
  border: 1px solid #a0a0a0;
  color: #3b3b46;
}

.pick span {
  flex: 1;
}

.pick svg {
  color: #777;
}

.address {
  display: flex;
  align-items: center;
  flex: 1;
  height: 20px;
  padding-left: 7px;
  border: 1px solid #a0a0a0;
}

.address input {
  flex: 1;
  padding-left: 4px;
}

.address svg {
  color: #777;
}

.content {
  display: flex;
  flex-direction: column;
  flex: 1;
  margin-top: 6px;
}

.field {
  display: flex;
  align-items: center;
  margin-bottom: 2px;
}

.field label {
  width: 62px;
  white-space: nowrap;
}

.field input {
  flex: 1;
  height: 20px;
  padding: 0 3px;
  border: 1px solid #a0a0a0;
}

.tabs.inner .tab {
  height: 24px;
  padding: 0 10px;
}

.tabs.inner .tab.active {
  height: 27px;
  padding: 0 11px;
}

/* Attachments */
.attachments {
  display: flex;
  flex-direction: column;
  flex: 1;
  border: 1px solid #a0a0a0;
}

.toolbar {
  display: flex;
  align-items: center;
  height: 28px;
  padding-left: 2px;
}

.tool {
  display: flex;
  align-items: center;
  justify-content: center;
  width: 26px;
  height: 24px;
}

.tool.split {
  gap: 1px;
  width: 35px;
}

.tool.roomy {
  gap: 8px;
  width: 43px;
}

.tool.open {
  background: #cde6f7;
}

.tool.faded {
  opacity: 0.7;
}

.divider {
  width: 1px;
  height: 22px;
  margin: 0 3px;
  background: #b4b4b4;
}

.dropdown {
  position: relative;
}

.menu {
  position: absolute;
  top: 24px;
  left: 0;
  z-index: 5;
  width: 177px;
  padding: 1px;
  background: linear-gradient(90deg, #f8f8f8 28px, #dcdcdc 28px 29px, #fff 29px);
  border: 1px solid #a0a0a0;
}

.menu button {
  display: flex;
  align-items: center;
  gap: 12px;
  width: 100%;
  height: 24px;
  padding-left: 4px;
  border: 1px solid transparent;
  font-size: 12px;
}

.menu .hover {
  background: #cde6f7;
  border-color: #7eb4ea;
}

.search {
  display: flex;
  width: 150px;
  height: 20px;
  margin: 0 8px 0 4px;
  border: 1px solid #a0a0a0;
}

.search input {
  flex: 1;
  min-width: 0;
  padding: 0 4px;
}

.search input::placeholder {
  color: #98a098;
}

.search button {
  padding: 0;
  background: #f0f0f0;
  border-left: 1px solid #a0a0a0;
}

.grid {
  width: 100%;
  table-layout: fixed;
  border-collapse: collapse;
}

.c-name { width: 228px; }
.c-desc { width: 292px; }
.c-file { width: 302px; }

.grid th {
  height: 19px;
  padding: 0 3px;
  font-weight: 400;
  text-align: left;
  border-bottom: 1px solid #a0a0a0;
}

.grid th + th {
  border-left: 1px solid #a0a0a0;
}

.grid-space {
  flex: 1;
}

.grid-footer {
  height: 31px;
  border-top: 1px solid #a0a0a0;
}

.pointer {
  position: absolute;
  left: 115px;
  top: 259px;
  z-index: 10;
  width: 110px;
  height: 72px;
}

.statusbar {
  display: flex;
  justify-content: flex-end;
  align-items: flex-end;
  height: 24px;
  padding: 3px;
  background: #0072c6;
}

.grip {
  width: 8px;
  height: 8px;
}
```
